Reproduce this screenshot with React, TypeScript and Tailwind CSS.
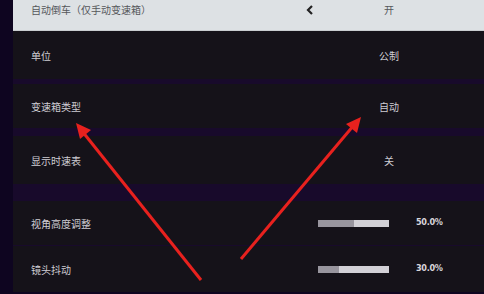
import React from 'react'

type Row = { label: string; value?: string; slider?: number; h: string }

const rows: Row[] = [
    { label: '单位', value: '公制', h: 'h-[48px]' },
    { label: '变速箱类型', value: '自动', h: 'h-[44px] mt-[5px]' },
    { label: '显示时速表', value: '关', h: 'h-[48px] mt-[8px]' },
]

const sliders: Row[] = [
    { label: '视角高度调整', slider: 50, h: 'h-[44px]' },
    { label: '镜头抖动', slider: 30, h: 'h-[46px] mt-[1px]' },
]

const font = { fontFamily: '"Noto Sans CJK SC", "Noto Sans", sans-serif' }

const SettingRow: React.FC<{ row: Row }> = ({ row }) => (
    <div className={`${row.h} flex items-center bg-[#151219] text-[10px] text-[#cfcdd3]`}>
        {row.value !== undefined ? (
            <>
                <span className="pl-[18px] w-[348px]">{row.label}</span>
                <span className="w-[56px] text-center">{row.value}</span>
            </>
        ) : (
            <>
                <span className="pl-[18px] w-[305px]">{row.label}</span>
                <div className="w-[71px] h-[7px] bg-[#d2d0d6] flex">
                    <div className="h-full bg-[#98959e]" style={{ width: `${row.slider}%` }} />
                </div>
                <span className="ml-[27px] text-[9px] font-bold tracking-[-0.3px] text-[#d8d6dc]" style={{ fontFamily: '"DejaVu Sans Condensed", "DejaVu Sans", sans-serif' }}>
                    {row.slider?.toFixed(1)}%
                </span>
            </>
        )}
    </div>
)

const App: React.FC = () => {
    return (
        <div className="relative w-[484px] h-[294px] overflow-hidden bg-[#0e0520] pl-[13px]" style={font}>
            <div className="flex flex-col bg-[#180a2b]">
                {/* highlighted row, cut off at the top */}
                <div className="h-[31px] flex items-start pt-[2px] bg-[#dde1e4] text-[10px] text-[#55575b] border-b border-[#c9cdd0]">
                    <span className="pl-[18px] w-[290px]">自动倒车（仅手动变速箱）</span>
                    <svg width="10" height="12" viewBox="0 0 10 12" className="ml-[2px] mt-[2px]">
                        <path d="M7 2 L3 6 L7 10" stroke="#222" strokeWidth="2.2" fill="none" />
                    </svg>
                    <span className="w-[56px] ml-[46px] text-center">开</span>
                </div>
                <div className="flex flex-col">
                    {rows.map((r) => <SettingRow key={r.label} row={r} />)}
                </div>
                <div className="h-[17px]" />
                <div className="flex flex-col">
                    {sliders.map((r) => <SettingRow key={r.label} row={r} />)}
                </div>
            </div>

            {/* annotation arrows */}
            <svg className="absolute left-0 top-0" width="484" height="294" viewBox="0 0 484 294">
                <line x1="201" y1="280" x2="82" y2="131" stroke="#e8211e" strokeWidth="3" />
                <polygon points="76,123 91,130 80,139" fill="#e8211e" />
                <line x1="241" y1="259" x2="354" y2="125" stroke="#e8211e" strokeWidth="3" />
                <polygon points="361,117 357,133 346,124" fill="#e8211e" />
            </svg>
        </div>
    )
}

export default App
